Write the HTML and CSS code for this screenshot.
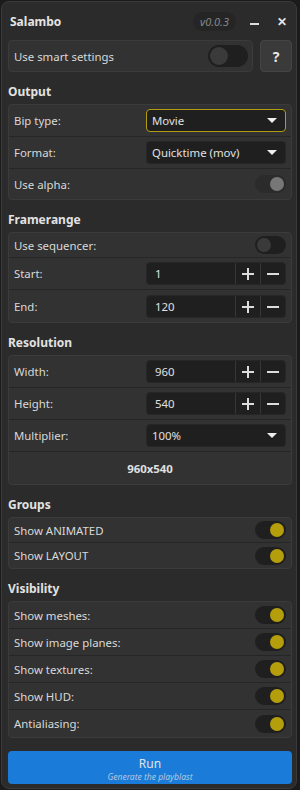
FILE: index.html
```html
<!DOCTYPE html>
<html lang="en">
<head>
    <meta charset="UTF-8">
    <title>Salambo</title>
    <link rel="stylesheet" href="styles.css">
</head>
<body>
    <div class="window">
        <div class="titlebar">
            <span class="title">Salambo</span>
            <span class="version">v0.0.3</span>
            <span class="win-btn minimize"></span>
            <span class="win-btn close">&#x2715;</span>
        </div>

        <div class="smart">
            <div class="box smart-box">
                <span class="label">Use smart settings</span>
                <span class="toggle big"></span>
            </div>
            <button class="help">?</button>
        </div>

        <h2>Output</h2>
        <div class="box">
            <div class="row tall">
                <span class="label">Bip type:</span>
                <div class="field select focused">Movie<span class="arrow"></span></div>
            </div>
            <div class="row tall">
                <span class="label">Format:</span>
                <div class="field select">Quicktime (mov)<span class="arrow"></span></div>
            </div>
            <div class="row">
                <span class="label">Use alpha:</span>
                <span class="toggle disabled"></span>
            </div>
        </div>

        <h2>Framerange</h2>
        <div class="box">
            <div class="row short">
                <span class="label">Use sequencer:</span>
                <span class="toggle"></span>
            </div>
            <div class="row tall">
                <span class="label">Start:</span>
                <div class="field spin"><span class="value">1</span><span class="step plus"></span><span class="step minus"></span></div>
            </div>
            <div class="row tall">
                <span class="label">End:</span>
                <div class="field spin"><span class="value">120</span><span class="step plus"></span><span class="step minus"></span></div>
            </div>
        </div>

        <h2>Resolution</h2>
        <div class="box">
            <div class="row tall">
                <span class="label">Width:</span>
                <div class="field spin"><span class="value">960</span><span class="step plus"></span><span class="step minus"></span></div>
            </div>
            <div class="row tall">
                <span class="label">Height:</span>
                <div class="field spin"><span class="value">540</span><span class="step plus"></span><span class="step minus"></span></div>
            </div>
            <div class="row tall">
                <span class="label">Multiplier:</span>
                <div class="field select">100%<span class="arrow"></span></div>
            </div>
            <div class="row tall result">960x540</div>
        </div>

        <h2>Groups</h2>
        <div class="box">
            <div class="row short">
                <span class="label">Show ANIMATED</span>
                <span class="toggle on"></span>
            </div>
            <div class="row short">
                <span class="label">Show LAYOUT</span>
                <span class="toggle on"></span>
            </div>
        </div>

        <h2>Visibility</h2>
        <div class="box">
            <div class="row mid">
                <span class="label">Show meshes:</span>
                <span class="toggle on"></span>
            </div>
            <div class="row mid">
                <span class="label">Show image planes:</span>
                <span class="toggle on"></span>
            </div>
            <div class="row mid">
                <span class="label">Show textures:</span>
                <span class="toggle on"></span>
            </div>
            <div class="row mid">
                <span class="label">Show HUD:</span>
                <span class="toggle on"></span>
            </div>
            <div class="row mid">
                <span class="label">Antialiasing:</span>
                <span class="toggle on"></span>
            </div>
        </div>

        <button class="run">
            <span class="run-title">Run</span>
            <small>Generate the playblast</small>
        </button>
    </div>
</body>
</html>
```

FILE: styles.css
```css
* {
    box-sizing: border-box;
}

body {
    margin: 0;
    background: #1b1b1b;
    font-family: 'Noto Sans', 'Open Sans', sans-serif;
    font-size: 11.4px;
    color: #d9d9d9;
}

.window {
    width: 296px;
    height: 788px;
    margin: 1px 0 0 1px;
    padding: 0 4px 0 6px;
    background: #2b2b2b;
    border: 1px solid #3a3a3a;
    border-radius: 8px;
}

.titlebar {
    display: flex;
    align-items: center;
    height: 38px;
    padding-left: 2px;
}

.title {
    font-weight: bold;
    font-size: 12px;
    color: #e4e4e4;
    flex: 1;
}

.version {
    background: #252525;
    color: #888;
    font-style: italic;
    font-size: 11px;
    padding: 2px 7px;
    border-radius: 10px;
    margin-right: 14px;
}

.win-btn {
    display: inline-block;
    color: #e6e6e6;
}

.minimize {
    width: 9px;
    height: 2px;
    background: #ddd;
    margin-top: 6px;
    margin-right: 18px;
}

.close {
    font-weight: bold;
    font-size: 12px;
    margin-right: 5px;
}

.smart {
    display: flex;
    gap: 7px;
    height: 32px;
}

.box {
    background: #323232;
    border: 1px solid #3b3b3b;
    border-radius: 4px;
}

.smart-box {
    flex: 1;
    display: flex;
    align-items: center;
    justify-content: space-between;
    padding: 0 4px 0 5px;
}

.help {
    width: 32px;
    height: 32px;
    background: #3a3a3a;
    border: 1px solid #444;
    border-radius: 4px;
    color: #e8e8e8;
    font-family: inherit;
    font-weight: bold;
    font-size: 14px;
    padding: 0;
}

h2 {
    margin: 0;
    font-size: 12px;
    font-weight: bold;
    color: #e2e2e2;
    height: 32px;
    line-height: 16px;
    padding-top: 12px;
}

.row {
    display: flex;
    align-items: center;
    justify-content: space-between;
    height: 30px;
    padding: 0 5px 0 5px;
    border-bottom: 1px solid #262626;
}

.row:last-child {
    border-bottom: none;
}

.row.tall {
    height: 32px;
}

.row.mid {
    height: 27px;
}

.row.short {
    height: 25px;
}

.result {
    justify-content: center;
    font-weight: bold;
    color: #e0e0e0;
}

.field {
    width: 140px;
    height: 23px;
    background: #1f1f1f;
    border: 1px solid #262626;
    border-radius: 4px;
    display: flex;
    align-items: center;
    color: #e0e0e0;
}

.select {
    padding: 0 8px 0 5px;
    justify-content: space-between;
}

.focused {
    border-color: #b19d12;
}

.arrow {
    width: 0;
    height: 0;
    border-left: 5px solid transparent;
    border-right: 5px solid transparent;
    border-top: 5px solid #eee;
}

.spin .value {
    flex: 1;
    padding-left: 8px;
}

.step {
    width: 25px;
    height: 100%;
    border-left: 1px solid #363636;
    position: relative;
}

.step::before,
.plus::after {
    content: "";
    position: absolute;
    left: 6px;
    top: 10px;
    width: 12px;
    height: 2px;
    background: #dcdcdc;
}

.plus::after {
    left: 11px;
    top: 5px;
    width: 2px;
    height: 12px;
}

.toggle {
    width: 31px;
    height: 18px;
    border-radius: 9px;
    background: #1f1f1f;
    position: relative;
}

.toggle::after {
    content: "";
    position: absolute;
    top: 2px;
    left: 2px;
    width: 14px;
    height: 14px;
    border-radius: 50%;
    background: #3a3a3a;
}

.toggle.big {
    width: 40px;
    height: 22px;
    border-radius: 11px;
}

.toggle.big::after {
    width: 18px;
    height: 18px;
}

.toggle.on::after {
    left: 15px;
    background: #b59e0c;
}

.toggle.disabled {
    background: #2b2b2b;
}

.toggle.disabled::after {
    left: 15px;
    background: #777;
}

.run {
    display: block;
    width: 100%;
    height: 33px;
    margin-top: 13px;
    background: #1a7bd8;
    border: none;
    border-radius: 4px;
    color: #e2e2e2;
    font-family: inherit;
    padding: 3px 0 0;
}

.run-title {
    display: block;
    font-size: 12px;
    line-height: 14px;
}

.run small {
    display: block;
    font-style: italic;
    font-size: 8.5px;
    line-height: 11px;
    color: #b3c7df;
}
```
